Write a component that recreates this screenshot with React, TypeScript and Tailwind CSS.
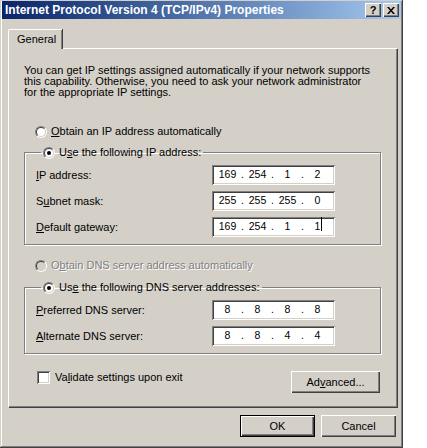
import React from 'react';

const FONT = { fontFamily: '"Liberation Sans", Arial, sans-serif' };

const Radio: React.FC<{ checked?: boolean; disabled?: boolean }> = ({ checked, disabled }) => (
  <span className="relative inline-block w-[12px] h-[12px] rounded-full shrink-0 border border-t-[#808080] border-l-[#808080] border-r-white border-b-white">
    <span
      className={`absolute inset-0 rounded-full border border-t-[#404040] border-l-[#404040] border-r-[#d4d0c8] border-b-[#d4d0c8] ${
        disabled ? 'bg-[#d4d0c8]' : 'bg-white'
      }`}
    />
    {checked && <span className="absolute left-[3px] top-[3px] w-[4px] h-[4px] rounded-full bg-black" />}
  </span>
);

const U: React.FC<{ children: React.ReactNode }> = ({ children }) => <span className="underline underline-offset-[1px]">{children}</span>;

const IpField: React.FC<{ octets: string[]; cursor?: boolean }> = ({ octets, cursor }) => (
  <div className="w-[123px] h-[20px] bg-white flex items-center pl-[4px] text-[10.5px] text-black shadow-[inset_1px_1px_0_#808080,inset_-1px_-1px_0_#ffffff,inset_2px_2px_0_#404040,inset_-2px_-2px_0_#d4d0c8]">
    {octets.map((o, i) => (
      <React.Fragment key={i}>
        <span className="w-[23px] text-center relative">
          {o}
          {cursor && i === 3 && <span className="absolute top-[-2px] ml-[1px] w-px h-[14px] bg-black" />}
        </span>
        {i < 3 && <span className="w-[7px] text-center">.</span>}
      </React.Fragment>
    ))}
  </div>
);

const Row: React.FC<{ label: React.ReactNode; octets: string[]; cursor?: boolean }> = ({ label, octets, cursor }) => (
  <div className="flex items-center h-[20px]">
    <div className="w-[176px]">{label}</div>
    <IpField octets={octets} cursor={cursor} />
  </div>
);

const Btn: React.FC<{ children: React.ReactNode; w: string; def?: boolean }> = ({ children, w, def }) => (
  <div className={`${w} h-[22px] ${def ? 'border border-black' : ''}`}>
    <div className="w-full h-full flex items-center justify-center text-[11px] text-black shadow-[inset_1px_1px_0_#ffffff,inset_-1px_-1px_0_#404040,inset_-2px_-2px_0_#808080]">
      {children}
    </div>
  </div>
);

export default function App() {
  return (
    <div className="w-[427px] h-[448px] bg-white" style={FONT}>
      <div className="w-[403px] h-[448px] bg-[#d4d0c8] pt-px px-[2px] shadow-[inset_-1px_-1px_0_#404040,inset_1px_1px_0_#d4d0c8,inset_-2px_-2px_0_#808080,inset_2px_2px_0_#ffffff] text-[11px] text-black">
        {/* title bar */}
        <div className="h-[18px] bg-gradient-to-r from-[#0a246a] to-[#a6caf0] flex items-center pl-[3px] pr-[2px]">
          <span className="text-white font-bold text-[12px] flex-1">Internet Protocol Version 4 (TCP/IPv4) Properties</span>
          <div className="w-[16px] h-[14px] bg-[#d4d0c8] flex items-center justify-center font-bold text-[11px] shadow-[inset_1px_1px_0_#ffffff,inset_-1px_-1px_0_#404040,inset_-2px_-2px_0_#808080]">?</div>
          <div className="w-[16px] h-[14px] ml-[2px] bg-[#d4d0c8] flex items-center justify-center shadow-[inset_1px_1px_0_#ffffff,inset_-1px_-1px_0_#404040,inset_-2px_-2px_0_#808080]">
            <svg width="8" height="7" viewBox="0 0 8 7">
              <path d="M0 0h2l2 2.5L6 0h2L5 3.5 8 7H6L4 4.5 2 7H0l3-3.5z" fill="#000" />
            </svg>
          </div>
        </div>

        {/* tabs */}
        <div className="ml-[6px] mt-[10px] flex">
          <div className="h-[20px] w-[54px] bg-[#d4d0c8] border-t border-l border-white shadow-[inset_-1px_0_0_#808080,1px_0_0_#404040] rounded-tl-[2px] flex items-center pl-[8px] -mb-px relative z-10">
            General
          </div>
        </div>

        {/* panel */}
        <div className="ml-[6px] w-[389px] h-[359px] border-t border-l border-white shadow-[inset_-1px_-1px_0_#808080,1px_1px_0_#404040] pl-[15px] pr-[16px]">
          <p className="mt-[16px] leading-[11px]">
            You can get IP settings assigned automatically if your network supports
            <br />
            this capability. Otherwise, you need to ask your network administrator
            <br />
            for the appropriate IP settings.
          </p>

          <div className="mt-[27px] ml-[11px] flex items-center gap-[4px] h-[13px]">
            <Radio />
            <span>
              <U>O</U>btain an IP address automatically
            </span>
          </div>

          <fieldset className="mt-[8px] border border-[#808080] shadow-[inset_1px_1px_0_#ffffff,1px_1px_0_#ffffff] pl-[11px] pb-[7px]">
            <legend className="ml-[5px] px-[2px] flex items-center gap-[4px] h-[13px]">
              <Radio checked />
              <span>
                U<U>s</U>e the following IP address:
              </span>
            </legend>
            <div className="mt-[6px] flex flex-col gap-[6px]">
              <Row label={<><U>I</U>P address:</>} octets={['169', '254', '1', '2']} />
              <Row label={<>S<U>u</U>bnet mask:</>} octets={['255', '255', '255', '0']} />
              <Row label={<><U>D</U>efault gateway:</>} octets={['169', '254', '1', '1']} cursor />
            </div>
          </fieldset>

          <div className="mt-[14px] ml-[11px] flex items-center gap-[4px] h-[13px] text-[#808080] [text-shadow:1px_1px_0_#ffffff]">
            <Radio disabled />
            <span>
              O<U>b</U>tain DNS server address automatically
            </span>
          </div>

          <fieldset className="mt-[9px] border border-[#808080] shadow-[inset_1px_1px_0_#ffffff,1px_1px_0_#ffffff] pl-[11px] pb-[7px]">
            <legend className="ml-[5px] px-[2px] flex items-center gap-[4px] h-[13px]">
              <Radio checked />
              <span>
                Us<U>e</U> the following DNS server addresses:
              </span>
            </legend>
            <div className="mt-[6px] flex flex-col gap-[6px]">
              <Row label={<><U>P</U>referred DNS server:</>} octets={['8', '8', '8', '8']} />
              <Row label={<><U>A</U>lternate DNS server:</>} octets={['8', '8', '4', '4']} />
            </div>
          </fieldset>

          <div className="mt-[17px] flex items-start justify-between pr-px">
            <div className="ml-[13px] flex items-center gap-[5px] h-[13px]">
              <span className="w-[13px] h-[13px] bg-white shadow-[inset_1px_1px_0_#808080,inset_-1px_-1px_0_#ffffff,inset_2px_2px_0_#404040,inset_-2px_-2px_0_#d4d0c8]" />
              <span>
                Va<U>l</U>idate settings upon exit
              </span>
            </div>
            <Btn w="w-[89px]">
              Ad<U>v</U>anced...
            </Btn>
          </div>
        </div>

        {/* footer buttons */}
        <div className="mt-[8px] flex justify-end gap-[6px] pr-[5px]">
          <Btn w="w-[75px]" def>
            OK
          </Btn>
          <Btn w="w-[75px]">Cancel</Btn>
        </div>
      </div>
    </div>
  );
}
